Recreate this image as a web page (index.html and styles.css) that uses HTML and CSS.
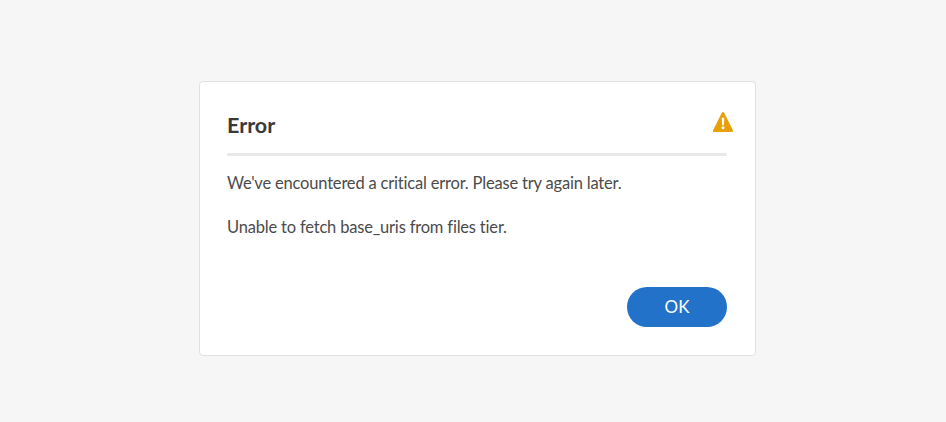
FILE: index.html
```html
<!DOCTYPE html>
<html lang="en">
<head>
<meta charset="utf-8">
<title>Error</title>
<link rel="stylesheet" href="styles.css">
</head>
<body>
<div class="dialog">
  <div class="header">
    <h1 class="title">Error</h1>
    <svg class="alert-icon" width="22" height="22" viewBox="0 0 22 22" aria-hidden="true">
      <path class="alert-shape" d="M11 1c-.5 0-.9.3-1.2.7L1.100 19.200c-.4.8.1 1.700 1 1.700h17.800c.9 0 1.400-.9 1-1.700L12.200 1.700C11.900 1.300 11.500 1 11 1z"/>
      <path class="alert-mark" d="M9.700 6.800h2.600l-.4 7.400h-1.800zM11 15.200a1.500 1.500 0 1 1 0 3 1.500 1.500 0 0 1 0-3z"/>
    </svg>
  </div>
  <div class="divider"></div>
  <div class="content">
    <p class="message">We've encountered a critical error. Please try again later.</p>
    <p class="message">Unable to fetch base_uris from files tier.</p>
  </div>
  <div class="footer">
    <button class="ok-button" type="button">OK</button>
  </div>
</div>
</body>
</html>
```
FILE: styles.css
```css
* { box-sizing: border-box; }
html, body { margin: 0; height: 100%; }
body {
  background: #f6f6f6;
  font-family: Lato, "Noto Sans", sans-serif;
  padding: 81px 0 0 199px;
  overflow: hidden;
}
.dialog {
  width: 557px;
  height: 275px;
  background: #fff;
  border: 1px solid #e1e1e1;
  border-radius: 4px;
  padding: 0 28px 0 27px;
  display: flex;
  flex-direction: column;
}
.header {
  height: 71px;
  display: flex;
  justify-content: space-between;
  position: relative;
}
.title {
  margin: 27px 0 0;
  font-size: 21.500px;
  line-height: 32px;
  font-weight: 700;
  color: #3a3a3a;
}
.alert-icon {
  position: absolute;
  right: -7px;
  top: 29px;
}
.alert-shape { fill: #e8a00a; }
.alert-mark { fill: #fff; }
.divider {
  height: 3px;
  background: #e8e8e8;
  border-radius: 2px;
}
.content { padding-top: 15px; flex: 1; }
.message {
  margin: 0 0 20px;
  font-size: 16.500px;
  letter-spacing: -0.19px;
  line-height: 24px;
  color: #4b4b4b;
  font-variant-ligatures: none;
}
.footer {
  display: flex;
  justify-content: flex-end;
  padding-bottom: 28px;
}
.ok-button {
  width: 100px;
  height: 40px;
  border: 0;
  border-radius: 20px;
  background: #2272c9;
  color: #fff;
  font: 400 17px/40px Lato, "Noto Sans", sans-serif;
  padding: 0;
}
```
